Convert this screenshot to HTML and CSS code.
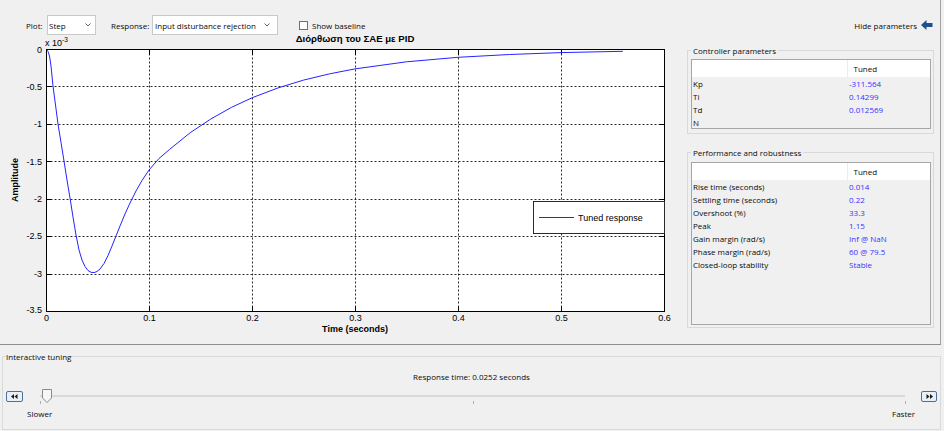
FILE: index.html
```html
<!DOCTYPE html>
<html>
<head>
<meta charset="utf-8">
<link rel="stylesheet" href="styles.css">
</head>
<body>
<div class="app">
  <section class="top">
    <div class="toolbar">
      <span class="lbl lbl-plot">Plot:</span>
      <div class="select sel-plot"><span>Step</span><svg class="chev" width="6" height="4" viewBox="0 0 6 4"><polyline points="0.5,0.5 3,3 5.5,0.5" fill="none" stroke="#606060" stroke-width="1"/></svg></div>
      <span class="lbl lbl-resp">Response:</span>
      <div class="select sel-resp"><span>Input disturbance rejection</span><svg class="chev" width="6" height="4" viewBox="0 0 6 4"><polyline points="0.5,0.5 3,3 5.5,0.5" fill="none" stroke="#606060" stroke-width="1"/></svg></div>
      <label class="check"><span class="box"></span>Show baseline</label>
      <span class="hide">Hide parameters</span>
      <svg class="arrow" width="12" height="10" viewBox="0 0 12 10"><path d="M0 5 L5.5 0 V3 H11.5 V7 H5.5 V10 Z" fill="#1f4f8f"/></svg>
    </div>
    <div class="main">
      <svg class="plot" width="680" height="309" viewBox="0 35 680 309">
        <text class="title" x="355" y="42">Διόρθωση του ΣΑΕ με PID</text>
        <text class="exp" x="45" y="45.5">x 10<tspan class="sup" dy="-4">-3</tspan></text>
        <rect x="46.5" y="49.5" width="618" height="262" fill="#fff"/>
        <g class="grid">
          <line x1="149.5" y1="49.5" x2="149.5" y2="311.5"/>
          <line x1="252.5" y1="49.5" x2="252.5" y2="311.5"/>
          <line x1="355.5" y1="49.5" x2="355.5" y2="311.5"/>
          <line x1="458.5" y1="49.5" x2="458.5" y2="311.5"/>
          <line x1="561.5" y1="49.5" x2="561.5" y2="311.5"/>
          <line x1="46.5" y1="86.5" x2="664.5" y2="86.5"/>
          <line x1="46.5" y1="124.5" x2="664.5" y2="124.5"/>
          <line x1="46.5" y1="161.5" x2="664.5" y2="161.5"/>
          <line x1="46.5" y1="199.5" x2="664.5" y2="199.5"/>
          <line x1="46.5" y1="236.5" x2="664.5" y2="236.5"/>
          <line x1="46.5" y1="274.5" x2="664.5" y2="274.5"/>
        </g>
        <g class="ticks">
          <path d="M149.5 311.5 v-5 M252.5 311.5 v-5 M355.5 311.5 v-5 M458.5 311.5 v-5 M561.5 311.5 v-5
                   M149.5 49.5 v5 M252.5 49.5 v5 M355.5 49.5 v5 M458.5 49.5 v5 M561.5 49.5 v5
                   M46.5 86.5 h5 M46.5 124.5 h5 M46.5 161.5 h5 M46.5 199.5 h5 M46.5 236.5 h5 M46.5 274.5 h5
                   M664.5 86.5 h-5 M664.5 124.5 h-5 M664.5 161.5 h-5 M664.5 199.5 h-5 M664.5 236.5 h-5 M664.5 274.5 h-5"/>
        </g>
        <polyline class="curve" points="46.5,49.5 48,51.5 49.5,56 51,66 53,86 55.5,105 58,124 61,142.5 64,161 67,180 70,198 73,217 76,235 79,250 82,260 85,266.5 88,270.5 91,272.3 94,272.6 97,271.5 100,269 104,263.5 108,255.5 112,246 116,236 120,226 125,214 130,203 136,191 142,180.5 149,170 159,158.5 169.6,149.4 190.2,132.7 210.8,119 231.4,107.4 252,97.8 277.8,88 303.5,80.1 329.3,73.9 355,68.9 406.5,61.8 458,57.3 509.5,54.5 561,52.6 622.8,51.3"/>
        <rect class="axbox" x="46.5" y="49.5" width="618" height="262"/>
        <g class="legend">
          <rect x="533.5" y="201.5" width="131" height="32"/>
          <line x1="539" y1="217.5" x2="574" y2="217.5"/>
          <text x="578" y="221">Tuned response</text>
        </g>
        <g class="ylabels">
          <text x="42" y="52.5">0</text>
          <text x="42" y="89.5">-0.5</text>
          <text x="42" y="127">-1</text>
          <text x="42" y="164.5">-1.5</text>
          <text x="42" y="202">-2</text>
          <text x="42" y="239">-2.5</text>
          <text x="42" y="276.5">-3</text>
          <text x="42" y="313">-3.5</text>
        </g>
        <g class="xlabels">
          <text x="46.5" y="320.5">0</text>
          <text x="149.5" y="320.5">0.1</text>
          <text x="252.5" y="320.5">0.2</text>
          <text x="355.5" y="320.5">0.3</text>
          <text x="458.5" y="320.5">0.4</text>
          <text x="561.5" y="320.5">0.5</text>
          <text x="664.5" y="320.5">0.6</text>
        </g>
        <text class="axlabel" x="355" y="331.5">Time (seconds)</text>
        <text class="axlabel" transform="translate(17.5,180) rotate(-90)">Amplitude</text>
      </svg>
      <div class="params">
        <fieldset class="group g1">
          <legend>Controller parameters</legend>
          <div class="twrap tw1">
            <table class="ptable">
              <thead><tr><th class="c1"></th><th class="c2">Tuned</th></tr></thead>
              <tbody>
                <tr><td class="c1">Kp</td><td class="c2">-311.564</td></tr>
                <tr><td class="c1">Ti</td><td class="c2">0.14299</td></tr>
                <tr><td class="c1">Td</td><td class="c2">0.012569</td></tr>
                <tr><td class="c1">N</td><td class="c2"></td></tr>
              </tbody>
            </table>
          </div>
        </fieldset>
        <fieldset class="group g2">
          <legend>Performance and robustness</legend>
          <div class="twrap tw2">
            <table class="ptable">
              <thead><tr><th class="c1"></th><th class="c2 h2">Tuned</th></tr></thead>
              <tbody>
                <tr><td class="c1">Rise time (seconds)</td><td class="c2">0.014</td></tr>
                <tr><td class="c1">Settling time (seconds)</td><td class="c2">0.22</td></tr>
                <tr><td class="c1">Overshoot (%)</td><td class="c2">33.3</td></tr>
                <tr><td class="c1">Peak</td><td class="c2">1.15</td></tr>
                <tr><td class="c1">Gain margin (rad/s)</td><td class="c2">Inf @ NaN</td></tr>
                <tr><td class="c1">Phase margin (rad/s)</td><td class="c2">60 @ 79.5</td></tr>
                <tr><td class="c1">Closed-loop stability</td><td class="c2">Stable</td></tr>
              </tbody>
            </table>
          </div>
        </fieldset>
      </div>
    </div>
  </section>
  <section class="bottom">
    <fieldset class="tuning">
      <legend>Interactive tuning</legend>
      <div class="resp-time">Response time: 0.0252 seconds</div>
      <div class="slider-row">
        <button class="stepbtn left" type="button"><svg width="7" height="5" viewBox="0 0 7 5"><path d="M0 2.5 L3 0 V5 Z M3.5 2.5 L6.5 0 V5 Z" fill="#1a1a1a"/></svg></button>
        <div class="slider">
          <div class="track"></div>
          <span class="tick tk0"></span>
          <span class="tick tk1"></span>
          <span class="tick tk2"></span>
          <svg class="thumb" width="10" height="14" viewBox="0 0 10 14"><path d="M0.5 0.5 H9.5 V9 L5 13.5 L0.5 9 Z" fill="#f6f6f6" stroke="#8a8a8a"/></svg>
        </div>
        <button class="stepbtn right" type="button"><svg width="7" height="5" viewBox="0 0 7 5"><path d="M0.5 0 L3.5 2.5 L0.5 5 Z M4 0 L7 2.5 L4 5 Z" fill="#1a1a1a"/></svg></button>
      </div>
      <div class="slider-labels"><span>Slower</span><span>Faster</span></div>
    </fieldset>
  </section>
</div>
</body>
</html>
```

FILE: styles.css
```css
* { box-sizing: border-box; }
html, body { margin: 0; padding: 0; }
body {
  width: 944px;
  height: 431px;
  overflow: hidden;
  background: #f0f0f0;
  font-family: "Open Sans", "Noto Sans", sans-serif;
  font-size: 8px;
  line-height: 11px;
  color: #0a0a0a;
}
.app { width: 944px; height: 431px; display: flex; flex-direction: column; }

/* top panel */
.top {
  width: 941px;
  height: 345px;
  border-right: 1px solid #a0a0a0;
  border-bottom: 1px solid #8e8e8e;
  display: flex;
  flex-direction: column;
}
.toolbar {
  margin-top: 15px;
  height: 20px;
  display: flex;
  align-items: center;
  padding-left: 26px;
  padding-right: 7px;
}
.lbl-plot { width: 21px; }
.lbl-resp { width: 41px; margin-left: 15px; }
.select {
  height: 20px;
  background: #fff;
  border: 1px solid #c9c9c9;
  display: flex;
  align-items: center;
  justify-content: space-between;
  padding: 0 4px 0 1px;
}
.sel-plot { width: 49px; }
.sel-resp { width: 126px; padding-left: 2px; padding-right: 7px; }
.chev { display: block; }
.check { display: flex; align-items: center; margin-left: 21px; }
.check .box {
  width: 9px; height: 9px;
  background: #fff;
  border: 1px solid #707070;
  margin-right: 4px;
}
.hide { margin-left: auto; margin-right: 4px; }
.arrow { display: block; }

.main { display: flex; height: 309px; }
.plot { display: block; flex: none; overflow: visible; }
.plot text { font-family: "Liberation Sans", Arial, sans-serif; font-size: 9px; fill: #000; }
.plot .title { font-size: 9.6px; font-weight: bold; text-anchor: middle; }
.plot .exp { font-size: 9px; }
.plot .sup { font-size: 6.5px; }
.grid line { stroke: #2a2a2a; stroke-width: 1; stroke-dasharray: 2 2; }
.ticks path { stroke: #000; stroke-width: 1; fill: none; }
.axbox { fill: none; stroke: #000; stroke-width: 1; }
.curve { fill: none; stroke: #2424ff; stroke-width: 1; stroke-linejoin: round; }
.legend rect { fill: #fff; stroke: #2a2a2a; stroke-width: 1; }
.legend line { stroke: #2424ff; stroke-width: 1; }
.ylabels text { text-anchor: end; }
.xlabels text { text-anchor: middle; }
.plot .axlabel { font-weight: bold; text-anchor: middle; }

/* parameter groups */
.params { width: 247px; margin-left: 7px; padding-top: 10px; display: flex; flex-direction: column; }
.group {
  margin: 0;
  padding: 0 2px 4px 3px;
  border: 1px solid #d9d9d9;
  min-width: 0;
}
.group legend { padding: 0 2px; line-height: 11px; }
.g2 { margin-top: 13px; padding-bottom: 2px; }
.twrap { border: 1px solid #a6a6a6; background: #f0f0f0; }
.tw1 { margin-top: 3px; height: 70px; }
.tw2 { margin-top: 4px; height: 163px; }
.ptable { width: 100%; border-collapse: collapse; table-layout: fixed; }
.ptable th { background: #fff; height: 17px; font-weight: normal; text-align: left; padding: 0; }
.ptable th.c2 { padding-left: 6px; border-left: 1px solid #ececec; }
.ptable td { height: 13px; padding: 0; line-height: 13px; white-space: nowrap; }
.ptable .c1 { width: 155px; padding-left: 1px; }
.ptable td.c2 { padding-left: 2px; color: #3434ff; }

/* bottom */
.bottom { flex: 1; display: flex; flex-direction: column; }
.tuning {
  margin: 6px 0 1px 2px;
  width: 939px;
  height: 79px;
  padding: 0 3px 0 3px;
  border: 1px solid #dadada;
  min-width: 0;
}
.tuning legend { padding: 0; line-height: 11px; }
.resp-time { text-align: center; margin-top: 9px; line-height: 11px; }
.slider-row { display: flex; align-items: center; height: 14px; margin-top: 7px; }
.stepbtn {
  width: 17px; height: 11px;
  padding: 0; margin: 0;
  border: 1px solid #49709a;
  border-radius: 2px;
  background: #eaf0f7;
  display: flex; align-items: center; justify-content: center;
  flex: none;
}
.stepbtn.right { width: 16px; }
.stepbtn svg { display: block; }
.slider { flex: 1; height: 14px; position: relative; }
.track { position: absolute; left: 17px; right: 16px; top: 6px; height: 2px; background: #d9d9d9; }
.tick { position: absolute; top: 12px; width: 1px; height: 3px; background: #b0b0b0; }
.tk0 { left: 17px; }
.tk1 { left: 450px; }
.tk2 { left: 882px; }
.thumb { position: absolute; left: 19px; top: 0; display: block; }
.slider-labels { display: flex; justify-content: space-between; padding: 0 22px 0 21px; margin-top: 5px; line-height: 11px; }
```
